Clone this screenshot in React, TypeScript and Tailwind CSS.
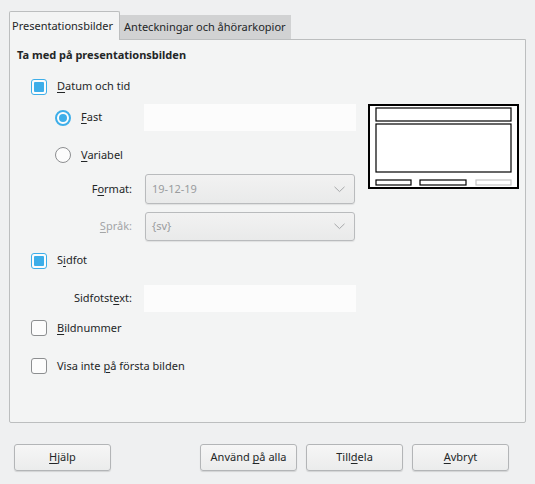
import React from 'react';

const font = { fontFamily: '"Noto Sans", "Open Sans", sans-serif' };

// Mnemonic: understryker en bokstav i etiketten
const M = ({ pre = '', u, post = '' }: { pre?: string; u: string; post?: string }) => (
  <span>
    {pre}
    <span className="underline underline-offset-2 decoration-[1px]">{u}</span>
    {post}
  </span>
);

const Check = ({ checked }: { checked?: boolean }) => (
  <div
    className={`w-4 h-4 rounded-[3px] border flex items-center justify-center bg-[#fcfcfc] ${
      checked ? 'border-[#3daee9]' : 'border-[#8c8e90]'
    }`}
  >
    {checked && <div className="w-[10px] h-[10px] bg-[#3daee9] rounded-[1px]" />}
  </div>
);

const Radio = ({ checked }: { checked?: boolean }) => (
  <div
    className={`w-4 h-4 rounded-full border flex items-center justify-center bg-[#fcfcfc] ${
      checked ? 'border-[#3daee9] border-2' : 'border-[#8c8e90]'
    }`}
  >
    {checked && <div className="w-[8px] h-[8px] bg-[#3daee9] rounded-full" />}
  </div>
);

const Select = ({ value }: { value: string }) => (
  <div className="w-[210px] h-full rounded-[3px] border border-[#b9bbbd] bg-gradient-to-b from-[#f2f2f2] to-[#e9eaea] shadow-[0_1px_1px_rgba(0,0,0,0.08)] flex items-center justify-between pl-[6px] pr-[9px] text-[#9a9c9e]">
    <span>{value}</span>
    <svg width="11" height="7" viewBox="0 0 11 7" fill="none">
      <path d="M0.5 0.8 L5.5 5.6 L10.5 0.8" stroke="#a6a8aa" strokeWidth="1" />
    </svg>
  </div>
);

const Button = ({ children, w = 'w-[97px]' }: { children: React.ReactNode; w?: string }) => (
  <div
    className={`${w} h-[27px] rounded-[3px] border border-[#b3b5b7] bg-gradient-to-b from-[#f6f6f6] to-[#ebecec] shadow-[0_1px_1px_rgba(0,0,0,0.12)] flex items-center justify-center`}
  >
    {children}
  </div>
);

const Preview = () => (
  <svg width="151" height="85" viewBox="0 0 151 85" className="block">
    <rect x="1" y="1" width="149" height="83" fill="#fff" stroke="#000" strokeWidth="2" />
    <rect x="8" y="4" width="135" height="13" fill="#fff" stroke="#000" strokeWidth="1.2" />
    <rect x="8" y="20" width="135" height="48" fill="#fff" stroke="#000" strokeWidth="1.2" />
    <rect x="8" y="76" width="35" height="5" fill="#fff" stroke="#000" strokeWidth="1.2" />
    <rect x="52" y="76" width="46" height="5" fill="#fff" stroke="#000" strokeWidth="1.2" />
    <rect x="108" y="76" width="35" height="5" fill="#fff" stroke="#c4c4c4" strokeWidth="1.2" />
  </svg>
);

export default function App() {
  return (
    <div style={font} className="w-[535px] h-[484px] bg-[#eff0f1] text-[#232627] text-[11px] flex flex-col">
      {/* Flikar */}
      <div className="flex items-end pt-[10px] pl-[9px] h-[39px]">
        <div className="relative z-10 h-[29px] -mb-px px-[2px] pr-[6px] flex items-center rounded-t-[2px] border border-b-0 border-[#bcbebf] bg-[#f3f4f4]">
          Presentationsbilder
        </div>
        <div className="h-[25px] -mb-px px-[4px] pr-[5px] flex items-center bg-[#d1d2d3] border-b border-[#bcbebf]">
          Anteckningar och åhörarkopior
        </div>
      </div>

      {/* Panel */}
      <div className="mx-[9px] h-[384px] border border-[#bcbebf] rounded-b-[2px] bg-[#f3f4f4] flex flex-col pl-[7px] pt-[7px]">
        <div className="h-[16px] flex items-center font-bold">Ta med på presentationsbilden</div>

        <div className="flex mt-[14px]">
          <div className="w-[339px] flex flex-col">
            <div className="h-[19px] flex items-center pl-[14px] gap-[10px]">
              <Check checked />
              <M u="D" post="atum och tid" />
            </div>
            <div className="h-[27px] mt-[8px] flex items-center">
              <div className="w-[127px] pl-[38px] flex items-center gap-[10px]">
                <Radio checked />
                <M u="F" post="ast" />
              </div>
              <div className="w-[212px] h-full bg-[#fcfcfc]" />
            </div>
            <div className="h-[20px] mt-[14px] flex items-center pl-[38px] gap-[10px]">
              <Radio />
              <M u="V" post="ariabel" />
            </div>
            <div className="h-[30px] mt-[9px] flex items-center">
              <div className="w-[115px] text-right pr-0">
                <M pre="F" u="o" post="rmat:" />
              </div>
              <div className="ml-[13px] h-full">
                <Select value="19-12-19" />
              </div>
            </div>
            <div className="h-[29px] mt-[8px] flex items-center">
              <div className="w-[115px] text-right text-[#a3a5a7]">
                <M u="S" post="pråk:" />
              </div>
              <div className="ml-[13px] h-full">
                <Select value="{sv}" />
              </div>
            </div>
          </div>
          <div className="ml-[12px] mt-[27px]">
            <Preview />
          </div>
        </div>

        <div className="h-[19px] mt-[10px] flex items-center pl-[14px] gap-[10px]">
          <Check checked />
          <M pre="S" u="i" post="dfot" />
        </div>
        <div className="h-[27px] mt-[15px] flex items-center">
          <div className="w-[115px] text-right">
            <M pre="Sidfotst" u="e" post="xt:" />
          </div>
          <div className="ml-[12px] w-[212px] h-full bg-[#fcfcfc]" />
        </div>
        <div className="h-[20px] mt-[6px] flex items-center pl-[14px] gap-[10px]">
          <Check />
          <M u="B" post="ildnummer" />
        </div>
        <div className="h-[20px] mt-[18px] flex items-center pl-[14px] gap-[10px]">
          <Check />
          <M pre="Visa inte " u="p" post="å första bilden" />
        </div>
      </div>

      {/* Knappar */}
      <div className="flex mt-[21px] pl-[14px]">
        <Button>
          <M u="H" post="jälp" />
        </Button>
        <div className="ml-[89px] flex gap-[9px]">
          <Button>
            <M pre="Använd " u="p" post="å alla" />
          </Button>
          <Button>
            <M pre="Till" u="d" post="ela" />
          </Button>
          <Button>
            <M u="A" post="vbryt" />
          </Button>
        </div>
      </div>
    </div>
  );
}
